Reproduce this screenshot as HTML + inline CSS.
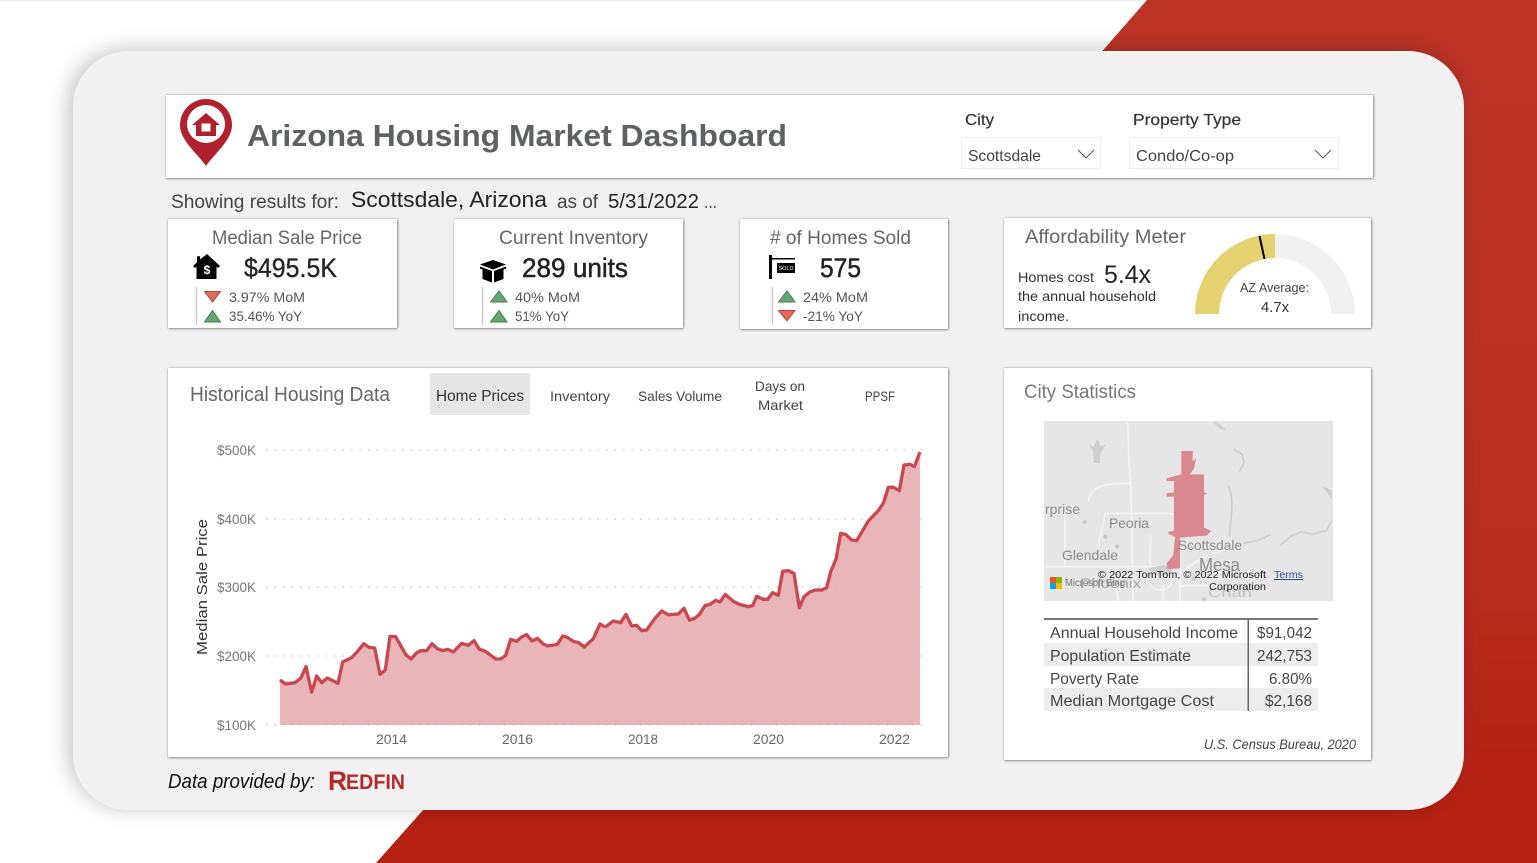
<!DOCTYPE html>
<html><head><meta charset="utf-8"><title>Arizona Housing Market Dashboard</title>
<style>
html,body{margin:0;padding:0;background:#fff;width:1537px;height:863px;overflow:hidden}
svg{display:block}
text{font-family:"Liberation Sans",sans-serif}
</style></head><body>
<svg width="1537" height="863" viewBox="0 0 1537 863" xmlns="http://www.w3.org/2000/svg">
<defs>
<linearGradient id="red" x1="0" y1="0" x2="0" y2="1"><stop offset="0" stop-color="#bb3327"/><stop offset=".7" stop-color="#b92d20"/><stop offset="1" stop-color="#b52012"/></linearGradient>
<filter id="ps" x="-10%" y="-10%" width="120%" height="120%"><feDropShadow dx="-5" dy="-2" stdDeviation="10" flood-color="#000" flood-opacity=".22"/></filter>
<filter id="cs" x="-5%" y="-5%" width="110%" height="110%"><feDropShadow dx=".5" dy=".5" stdDeviation="1.300" flood-color="#000" flood-opacity=".6"/></filter>
<clipPath id="mc"><rect x="1044" y="421" width="289" height="180"/></clipPath>
</defs>
<rect width="1537" height="863" fill="#fff"/>
<rect width="1537" height="1" fill="#eee"/>
<polygon points="1147,0 1537,0 1537,811 1091,811 1091,64" fill="url(#red)"/>
<polygon points="424,809 1537,809 1537,863 376,863" fill="#b52012"/>
<rect x="73" y="51" width="1391" height="759" rx="56" ry="56" fill="#f1f1f1" filter="url(#ps)"/>

<!-- header -->
<rect x="166" y="95" width="1207" height="83" fill="#fff" filter="url(#cs)"/>
<path d="M206 99a26 26 0 0 1 26 26c0 15-16 27-26 41c-10-14-26-26-26-41a26 26 0 0 1 26-26z" fill="#b1202f"/>
<circle cx="206" cy="124" r="19" fill="#fff"/>
<path d="M206 113l14 12h-4v11h-20v-11h-4zM201.500 123.500v8h9v-8z" fill="#b1202f" fill-rule="evenodd"/>
<text x="247" y="146" font-size="31" font-weight="700" fill="#5f6062" textLength="540" lengthAdjust="spacingAndGlyphs">Arizona Housing Market Dashboard</text>
<text x="965" y="125" font-size="16" fill="#333" stroke="#333" stroke-width=".2" textLength="29" lengthAdjust="spacingAndGlyphs">City</text>
<text x="1133" y="125" font-size="16" fill="#333" stroke="#333" stroke-width=".2" textLength="108" lengthAdjust="spacingAndGlyphs">Property Type</text>
<rect x="961.500" y="137.500" width="139" height="31" fill="#fff" stroke="#eee"/>
<rect x="1129.500" y="137.500" width="209" height="31" fill="#fff" stroke="#eee"/>
<text x="968" y="161" font-size="16" fill="#444" textLength="73" lengthAdjust="spacingAndGlyphs">Scottsdale</text>
<text x="1136" y="161" font-size="16" fill="#444" textLength="98" lengthAdjust="spacingAndGlyphs">Condo/Co-op</text>
<path d="M1078 150l8 8l8-8M1315 150l8 8l8-8" fill="none" stroke="#555" stroke-width="1"/>

<text x="171" y="208" font-size="19" fill="#444" textLength="168" lengthAdjust="spacingAndGlyphs">Showing results for:</text>
<text x="351" y="207" font-size="22" fill="#222" textLength="196" lengthAdjust="spacingAndGlyphs">Scottsdale, Arizona</text>
<text x="557" y="208" font-size="19" fill="#444" textLength="41" lengthAdjust="spacingAndGlyphs">as of</text>
<text x="608" y="208" font-size="20" fill="#222" textLength="91" lengthAdjust="spacingAndGlyphs">5/31/2022</text>
<text x="704" y="208" font-size="19" fill="#444" textLength="13" lengthAdjust="spacingAndGlyphs">...</text>

<!-- KPI cards -->
<rect x="168" y="219" width="229" height="109" fill="#fff" filter="url(#cs)"/>
<rect x="454" y="219" width="229" height="109" fill="#fff" filter="url(#cs)"/>
<rect x="740" y="219" width="208" height="110" fill="#fff" filter="url(#cs)"/>
<rect x="1004" y="218" width="367" height="110" fill="#fff" filter="url(#cs)"/>
<g fill="#666" font-size="19">
<text x="212" y="244" textLength="150" lengthAdjust="spacingAndGlyphs">Median Sale Price</text>
<text x="499" y="244" textLength="149" lengthAdjust="spacingAndGlyphs">Current Inventory</text>
<text x="770" y="244" textLength="141" lengthAdjust="spacingAndGlyphs"># of Homes Sold</text>
<text x="1025" y="243" textLength="161" lengthAdjust="spacingAndGlyphs">Affordability Meter</text>
</g>
<g fill="#222" stroke="#222" font-size="27">
<text x="244" y="277" stroke-width=".3" textLength="93" lengthAdjust="spacingAndGlyphs">$495.5K</text>
<text x="522" y="277" stroke-width=".5" textLength="106" lengthAdjust="spacingAndGlyphs">289 units</text>
<text x="820" y="277" stroke-width=".5" textLength="41" lengthAdjust="spacingAndGlyphs">575</text>
</g>
<!-- house icon -->
<path d="M207 254l13 12l-2 2l-1.500-1.300v12.300h-20v-12.300l-1.500 1.300l-2-2l4-3.700v-6h3v3.200z" fill="#000"/>
<text x="207" y="274" font-size="12" font-weight="700" fill="#fff" text-anchor="middle">$</text>
<!-- box icon -->
<path d="M493 260l13 4.500l-13 5l-13-5zM480 266.500l12 4.500v11.500l-9.500-3.500v-9.500l-2.500-1zM506 266.500l-12 4.500v11.500l9.500-3.500v-9.500l2.500-1z" fill="#000"/>
<!-- sold sign -->
<rect x="769" y="255" width="3" height="24" fill="#000"/>
<rect x="769" y="258" width="26" height="1.500" fill="#000"/>
<rect x="777" y="263" width="18" height="10" fill="#000"/>
<text x="786" y="270" font-size="5.500" fill="#fff" text-anchor="middle">SOLD</text>

<path d="M196.500 287v38M482.500 287v38M772.500 287v38" stroke="#ccc" stroke-width="1.500" fill="none"/>
<g stroke-width="1">
<polygon points="204.500,291.500 220.500,291.500 212.500,302" fill="#e0695a" stroke="#b4473b"/>
<polygon points="204.500,322 220.500,322 212.500,310.500" fill="#67a671" stroke="#3f7f50"/>
<polygon points="490.500,302 507,302 499,291" fill="#67a671" stroke="#3f7f50"/>
<polygon points="490.500,322 507,322 499,310.500" fill="#67a671" stroke="#3f7f50"/>
<polygon points="778.500,302 795,302 787,291" fill="#67a671" stroke="#3f7f50"/>
<polygon points="778.500,310.500 795,310.500 787,321" fill="#e0695a" stroke="#b4473b"/>
</g>
<g fill="#555" font-size="14">
<text x="229" y="302" textLength="76" lengthAdjust="spacingAndGlyphs">3.97% MoM</text>
<text x="229" y="321" textLength="73" lengthAdjust="spacingAndGlyphs">35.46% YoY</text>
<text x="515" y="302" textLength="65" lengthAdjust="spacingAndGlyphs">40% MoM</text>
<text x="515" y="321" textLength="54" lengthAdjust="spacingAndGlyphs">51% YoY</text>
<text x="803" y="302" textLength="65" lengthAdjust="spacingAndGlyphs">24% MoM</text>
<text x="803" y="321" textLength="60" lengthAdjust="spacingAndGlyphs">-21% YoY</text>
</g>
<!-- gauge -->
<path d="M1195 314a80 80 0 0 1 160 0h-24a56 56 0 0 0-112 0z" fill="#f1f1f1"/>
<path d="M1195 314a80 80 0 0 1 80-80v24a56 56 0 0 0-56 56z" fill="#e3d26f"/>
<path d="M1259.500 236l5 23" stroke="#000" stroke-width="2"/>
<text x="1018" y="282" font-size="14" fill="#333" textLength="76" lengthAdjust="spacingAndGlyphs">Homes cost</text>
<text x="1104" y="283" font-size="25" fill="#222" textLength="47" lengthAdjust="spacingAndGlyphs">5.4x</text>
<text x="1018" y="301" font-size="14" fill="#333" textLength="138" lengthAdjust="spacingAndGlyphs">the annual household</text>
<text x="1018" y="321" font-size="14" fill="#333" textLength="51" lengthAdjust="spacingAndGlyphs">income.</text>
<text x="1240" y="292" font-size="13" fill="#444" textLength="69" lengthAdjust="spacingAndGlyphs">AZ Average:</text>
<text x="1261" y="312" font-size="15" fill="#333" textLength="28" lengthAdjust="spacingAndGlyphs">4.7x</text>

<!-- chart card -->
<rect x="168" y="368" width="780" height="389" fill="#fff" filter="url(#cs)"/>
<text x="190" y="401" font-size="20" fill="#666" textLength="200" lengthAdjust="spacingAndGlyphs">Historical Housing Data</text>
<rect x="430" y="373" width="100" height="42" fill="#e6e6e6"/>
<text x="436" y="401" font-size="16" fill="#333" textLength="88" lengthAdjust="spacingAndGlyphs">Home Prices</text>
<g font-size="14" fill="#444">
<text x="550" y="401" textLength="60" lengthAdjust="spacingAndGlyphs">Inventory</text>
<text x="638" y="401" textLength="84" lengthAdjust="spacingAndGlyphs">Sales Volume</text>
<text x="755" y="391" textLength="50" lengthAdjust="spacingAndGlyphs">Days on</text>
<text x="758" y="410" textLength="45" lengthAdjust="spacingAndGlyphs">Market</text>
<text x="865" y="401" textLength="30" lengthAdjust="spacingAndGlyphs">PPSF</text>
</g>
<g font-size="14" fill="#777">
<text x="217" y="455" textLength="39" lengthAdjust="spacingAndGlyphs">$500K</text>
<text x="217" y="524" textLength="39" lengthAdjust="spacingAndGlyphs">$400K</text>
<text x="217" y="592" textLength="39" lengthAdjust="spacingAndGlyphs">$300K</text>
<text x="217" y="661" textLength="39" lengthAdjust="spacingAndGlyphs">$200K</text>
<text x="217" y="730" textLength="39" lengthAdjust="spacingAndGlyphs">$100K</text>
</g>
<text transform="translate(207 655) rotate(-90)" font-size="15" fill="#333" textLength="136" lengthAdjust="spacingAndGlyphs">Median Sale Price</text>
<g font-size="14" fill="#666">
<text x="376" y="744" textLength="31" lengthAdjust="spacingAndGlyphs">2014</text>
<text x="502" y="744" textLength="31" lengthAdjust="spacingAndGlyphs">2016</text>
<text x="628" y="744" textLength="30" lengthAdjust="spacingAndGlyphs">2018</text>
<text x="753" y="744" textLength="31" lengthAdjust="spacingAndGlyphs">2020</text>
<text x="879" y="744" textLength="31" lengthAdjust="spacingAndGlyphs">2022</text>
</g>
<g transform="translate(270 510) scale(.33333)">
<polygon fill="#e9b5b8" points="30,645 30,510 47,522 75,518 92,505 108,470 125,546 140,498 155,518 172,504 204,520 218,456 245,443 262,425 281,401 297,412 314,414 330,493 346,480 360,379 377,380 408,435 424,447 438,430 452,422 470,422 486,401 502,416 518,422 534,418 550,426 575,400 595,406 612,392 628,418 645,423 677,447 692,447 707,436 722,388 740,394 755,381 770,374 786,393 802,385 820,402 833,408 862,403 878,378 892,382 910,394 926,398 943,411 970,386 990,342 990,645"/>
</g>
<g transform="translate(600 440) scale(.33333)">
<polygon fill="#e9b5b8" points="0,855 0,553 15,562 40,543 62,548 78,523 95,558 110,556 125,572 140,570 165,535 185,513 205,524 235,522 252,505 268,540 282,536 298,524 315,497 330,493 347,481 360,486 376,463 400,484 420,494 445,500 458,497 470,469 490,478 503,478 518,458 535,466 548,394 565,392 582,400 598,503 612,470 628,457 645,450 665,450 680,443 692,395 708,358 722,280 738,284 755,300 770,302 805,243 835,212 850,190 865,142 880,142 898,152 912,75 930,73 943,80 960,36 960,855"/>
</g>
<path d="M266 450H928M266 519H928M266 587H928M266 656H928M266 725H928" stroke="#bdb9b9" stroke-width="1" stroke-dasharray="1.500 7" fill="none"/>
<g transform="translate(270 510) scale(.33333)" fill="none" stroke="#c94850" stroke-width="10" stroke-linejoin="round">
<polyline points="30,510 47,522 75,518 92,505 108,470 125,546 140,498 155,518 172,504 204,520 218,456 245,443 262,425 281,401 297,412 314,414 330,493 346,480 360,379 377,380 408,435 424,447 438,430 452,422 470,422 486,401 502,416 518,422 534,418 550,426 575,400 595,406 612,392 628,418 645,423 677,447 692,447 707,436 722,388 740,394 755,381 770,374 786,393 802,385 820,402 833,408 862,403 878,378 892,382 910,394 926,398 943,411 970,386 990,342 1005,351"/>
</g>
<g transform="translate(600 440) scale(.33333)" fill="none" stroke="#c94850" stroke-width="10" stroke-linejoin="round">
<polyline points="15,562 40,543 62,548 78,523 95,558 110,556 125,572 140,570 165,535 185,513 205,524 235,522 252,505 268,540 282,536 298,524 315,497 330,493 347,481 360,486 376,463 400,484 420,494 445,500 458,497 470,469 490,478 503,478 518,458 535,466 548,394 565,392 582,400 598,503 612,470 628,457 645,450 665,450 680,443 692,395 708,358 722,280 738,284 755,300 770,302 805,243 835,212 850,190 865,142 880,142 898,152 912,75 930,73 943,80 960,36"/>
</g>

<!-- city stats -->
<rect x="1004" y="368" width="367" height="392" fill="#fff" filter="url(#cs)"/>
<text x="1024" y="398" font-size="19" fill="#777" textLength="112" lengthAdjust="spacingAndGlyphs">City Statistics</text>
<g clip-path="url(#mc)">
<rect x="1044" y="421" width="289" height="180" fill="#e6e6e6"/>
<g transform="translate(1040 415) scale(.33333)">
<g fill="none" stroke="#f3f3f3" stroke-width="5">
<path d="M262 18C268 60 262 120 272 200C276 300 275 420 280 560"/>
<path d="M145 260C150 220 175 205 270 205"/>
<path d="M75 290V450M195 295H380C410 295 420 310 420 330V560"/>
<path d="M195 295C190 340 175 370 175 400M330 360C335 400 325 440 335 455"/>
<path d="M15 455H380M370 510V560M420 512H630M225 510C230 530 235 545 235 560"/>
<path d="M440 460C480 430 520 410 570 400"/>
<circle cx="362" cy="490" r="36" stroke-width="4"/>
</g>
<g fill="#cfcfcf">
<path d="M145 85l15 12l12-25l10 22l15-5l-15 25l-2 30l-18 0l-3-35z"/>
<path d="M522 18l18 10l20 18l-15-2l-25-20zM845 212l30 14v28l-14-22zM325 460l45-10l30 12l-20 18l-40-2z"/>
</g>
<g fill="none" stroke="#cfcfcf" stroke-width="5">
<path d="M580 102l25 15l8 25l-15 28M565 210C582 250 575 290 568 365"/>
<path d="M610 385l40-8l25-10l15-8M720 392l35-30l30-12l35 8l40-12l15-30"/>
</g>
<g fill="#c8c8c8"><circle cx="134" cy="321" r="6"/><circle cx="196" cy="365" r="6"/><circle cx="232" cy="394" r="6"/><circle cx="462" cy="491" r="6"/><circle cx="492" cy="553" r="6"/></g>
<polygon fill="#da8890" points="424,108 458,108 458,140 468,130 462,160 450,178 492,178 492,232 502,236 492,240 492,338 514,348 500,362 420,368 420,460 382,462 380,445 400,420 405,366 385,356 385,350 402,348 402,245 380,245 380,235 402,232 402,198 380,198 380,190 410,182 424,178"/>
</g>
<g fill="#8c8c8c">
<text x="1045" y="514" font-size="14" textLength="35" lengthAdjust="spacingAndGlyphs">rprise</text>
<text x="1109" y="528" font-size="14" textLength="40" lengthAdjust="spacingAndGlyphs">Peoria</text>
<text x="1178" y="550" font-size="14" textLength="64" lengthAdjust="spacingAndGlyphs">Scottsdale</text>
<text x="1062" y="560" font-size="14" textLength="56" lengthAdjust="spacingAndGlyphs">Glendale</text>
<text x="1199" y="571" font-size="18" textLength="41" lengthAdjust="spacingAndGlyphs">Mesa</text>
<text x="1080" y="588" font-size="14" fill="#a5a5a5" textLength="61" lengthAdjust="spacingAndGlyphs">Phoenix</text>
<text x="1208" y="597" font-size="13" fill="#c4c4c4" textLength="44" lengthAdjust="spacingAndGlyphs">Chan</text>
</g>
<rect x="1050" y="577" width="6" height="6" fill="#f25022"/><rect x="1056" y="577" width="6" height="6" fill="#7fba00"/>
<rect x="1050" y="583" width="6" height="6" fill="#00a4ef"/><rect x="1056" y="583" width="6" height="6" fill="#ffb900"/>
<text x="1065" y="586" font-size="10" fill="#777" textLength="60" lengthAdjust="spacingAndGlyphs">Microsoft Bing</text>
<text x="1098" y="578" font-size="10.500" fill="#222" textLength="168" lengthAdjust="spacingAndGlyphs">© 2022 TomTom, © 2022 Microsoft</text>
<text x="1209" y="590" font-size="10.500" fill="#222" textLength="57" lengthAdjust="spacingAndGlyphs">Corporation</text>
<text x="1274" y="578" font-size="10.500" fill="#3a4a9a" text-decoration="underline" textLength="29" lengthAdjust="spacingAndGlyphs">Terms</text>
</g>
<rect x="1044" y="643" width="274" height="23" fill="#eeeded"/>
<rect x="1044" y="688" width="274" height="23" fill="#eeeded"/>
<rect x="1044" y="618" width="274" height="2" fill="#777"/>
<rect x="1247.500" y="619" width="1.500" height="92" fill="#666"/>
<g font-size="16" fill="#444">
<text x="1050" y="638" textLength="188" lengthAdjust="spacingAndGlyphs">Annual Household Income</text>
<text x="1050" y="661" textLength="141" lengthAdjust="spacingAndGlyphs">Population Estimate</text>
<text x="1050" y="684" textLength="89" lengthAdjust="spacingAndGlyphs">Poverty Rate</text>
<text x="1050" y="706" textLength="164" lengthAdjust="spacingAndGlyphs">Median Mortgage Cost</text>
<text x="1257" y="638" textLength="55" lengthAdjust="spacingAndGlyphs">$91,042</text>
<text x="1257" y="661" textLength="55" lengthAdjust="spacingAndGlyphs">242,753</text>
<text x="1269" y="684" textLength="43" lengthAdjust="spacingAndGlyphs">6.80%</text>
<text x="1265" y="706" textLength="47" lengthAdjust="spacingAndGlyphs">$2,168</text>
</g>
<text x="1204" y="749" font-size="14" font-style="italic" fill="#444" textLength="152" lengthAdjust="spacingAndGlyphs">U.S. Census Bureau, 2020</text>

<text x="168" y="788" font-size="20" font-style="italic" fill="#111" textLength="147" lengthAdjust="spacingAndGlyphs">Data provided by:</text>
<text x="328" y="790" font-size="27" font-weight="700" fill="#b5292d" textLength="19" lengthAdjust="spacingAndGlyphs">R</text>
<text x="346" y="789" font-size="21" font-weight="700" fill="#b5292d" textLength="59" lengthAdjust="spacingAndGlyphs">EDFIN</text>
</svg>
</body></html>
